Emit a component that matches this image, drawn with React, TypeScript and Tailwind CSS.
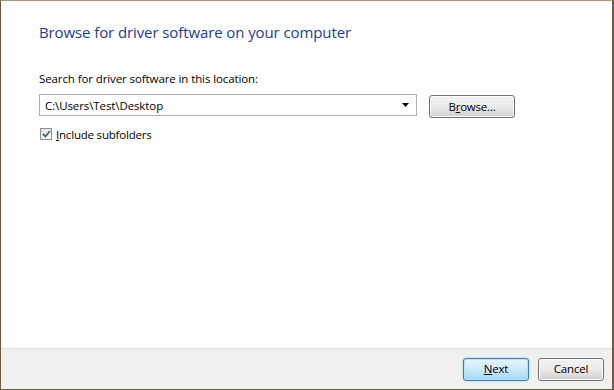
import React from "react";

const font = { fontFamily: '"Open Sans", "Noto Sans", sans-serif' };

function Button({ children, primary }: { children: React.ReactNode; primary?: boolean }) {
  return (
    <button
      className={
        primary
          ? "h-[23px] w-[66px] rounded-[3px] border border-[#3c7fb1] bg-gradient-to-b from-[#e5f4fc] via-[#cdeafa] to-[#9fd5f3] text-[11.5px] tracking-[-0.2px] text-black shadow-[inset_0_0_0_1px_#b9e2f7,0_0_2px_#7fc4ea]"
          : "h-[23px] w-[66px] rounded-[3px] border border-[#707070] bg-gradient-to-b from-[#f2f2f2] via-[#ebebeb] to-[#cfcfcf] text-[11.5px] tracking-[-0.2px] text-black shadow-[inset_0_0_0_1px_#fcfcfc]"
      }
    >
      {children}
    </button>
  );
}

export default function App() {
  return (
    <div className="h-[390px] w-[614px] bg-white" style={font}>
      <div className="flex h-full w-full flex-col border-x border-b border-t border-x-[#6e5a3c] border-b-[#6e5a3c] border-t-[#a89878] border-r-2">
        <main className="flex-1 pl-[38px] pt-[20px]">
          <h1 className="text-[15px] tracking-[-0.1px] text-[#1f3b8f]">Browse for driver software on your computer</h1>
          <p className="mt-[26px] text-[11.5px] tracking-[-0.1px] text-black">Search for driver software in this location:</p>
          <div className="mt-[6px] flex items-center">
            <div className="flex h-[22px] w-[378px] items-center justify-between border border-[#abadb3] pl-[5px] pr-[6px] text-[11.5px] tracking-[-0.1px]">
              <span>C:\Users\Test\Desktop</span>
              <svg width="8" height="4" viewBox="0 0 8 4">
                <path d="M0 0h7L3.5 4z" fill="#000" />
              </svg>
            </div>
            <button className="ml-[12px] mt-[2px] h-[23px] w-[86px] rounded-[3px] border border-[#707070] bg-gradient-to-b from-[#f2f2f2] via-[#ebebeb] to-[#cfcfcf] text-[11.5px] tracking-[-0.2px] shadow-[inset_0_0_0_1px_#fcfcfc]">
              B<span className="underline">r</span>owse...
            </button>
          </div>
          <label className="mt-[8px] flex items-center gap-[4px] text-[11.5px] tracking-[-0.2px]">
            <span className="ml-[1px] flex h-[12px] w-[12px] items-center justify-center border border-[#8e8f8f] bg-gradient-to-br from-[#dcdcdc] to-white">
              <svg width="9" height="8" viewBox="0 0 9 8">
                <path d="M1 4l2.5 2.5L8 1" stroke="#4a5f97" strokeWidth="1.8" fill="none" />
              </svg>
            </span>
            <span>
              <span className="underline">I</span>nclude subfolders
            </span>
          </label>
        </main>
        <footer className="flex h-[41px] items-center justify-end gap-[9px] border-t border-[#dfdfdf] bg-[#f0f0f0] pr-[8px]">
          <Button primary>
            <span className="underline">N</span>ext
          </Button>
          <Button>Cancel</Button>
        </footer>
      </div>
    </div>
  );
}
